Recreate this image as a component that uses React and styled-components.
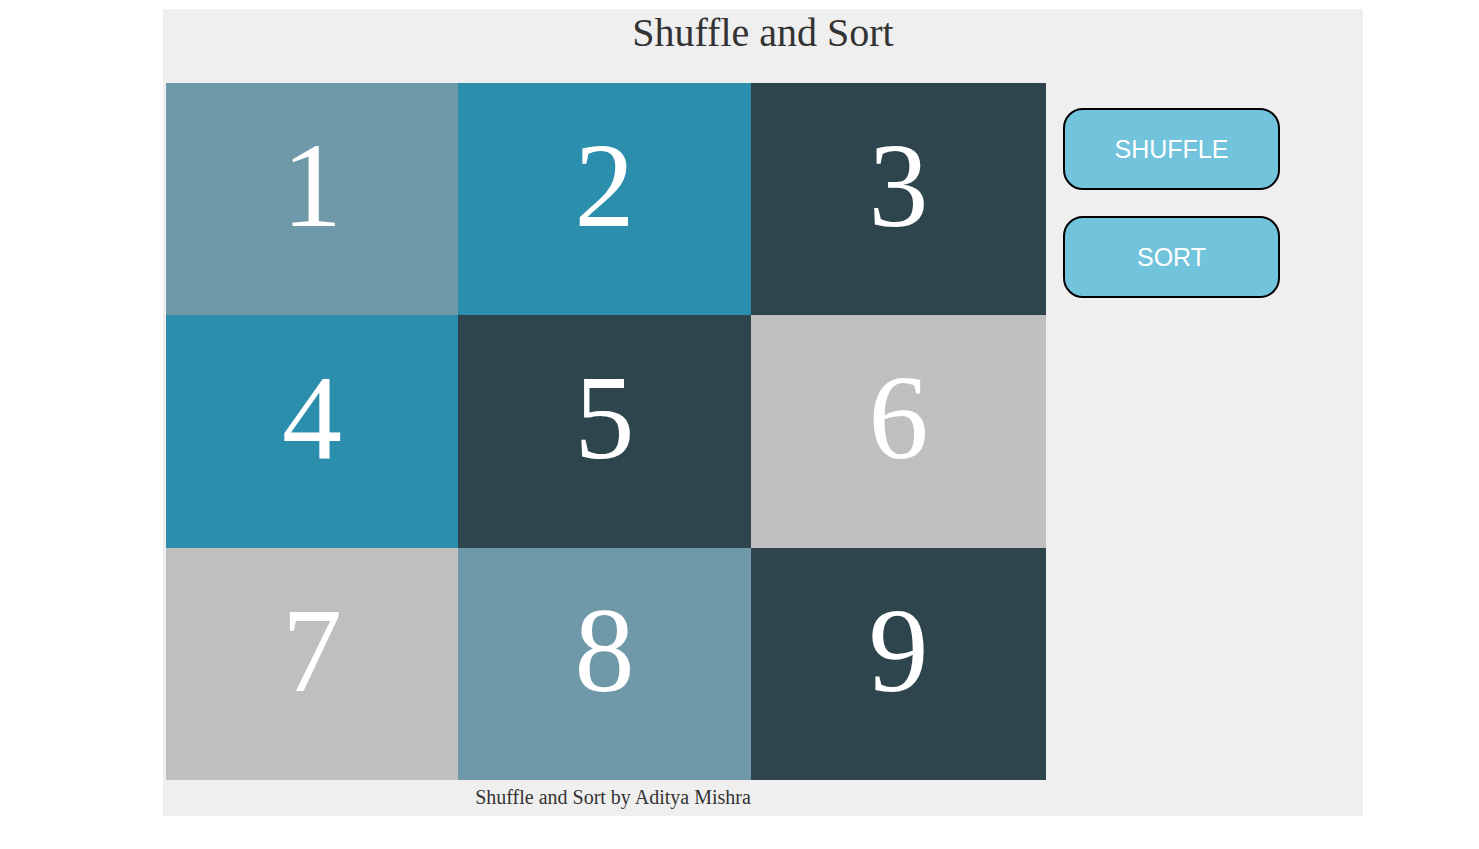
import React, { useState } from "react";
import styled, { createGlobalStyle } from "styled-components";

const GlobalStyle = createGlobalStyle`
  body {
    margin: 8px;
    background: #ffffff;
    font-family: "Liberation Serif", "Times New Roman", serif;
  }
`;

const COLORS = {
  1: "#6f98a8",
  2: "#2b8ead",
  3: "#2f454e",
  4: "#2b8ead",
  5: "#2f454e",
  6: "#bfbfbf",
  7: "#bfbfbf",
  8: "#6f98a8",
  9: "#2f454e",
};

const ORDER = [1, 2, 3, 4, 5, 6, 7, 8, 9];

export default function App() {
  const [cards, setCards] = useState(ORDER);

  const shuffle = () => {
    const next = [...cards];
    for (let i = next.length - 1; i > 0; i--) {
      const j = Math.floor(Math.random() * (i + 1));
      [next[i], next[j]] = [next[j], next[i]];
    }
    setCards(next);
  };

  const sort = () => setCards([...cards].sort((a, b) => a - b));

  return (
    <>
      <GlobalStyle />
      <Container>
        <Title>Shuffle and Sort</Title>
        <Body>
          <Main>
            <Grid>
              {cards.map((n) => (
                <Card key={n} $bg={COLORS[n]}>
                  {n}
                </Card>
              ))}
            </Grid>
            <Footer>Shuffle and Sort by Aditya Mishra</Footer>
          </Main>
          <Controls>
            <Button onClick={shuffle}>SHUFFLE</Button>
            <Button onClick={sort}>SORT</Button>
          </Controls>
        </Body>
      </Container>
    </>
  );
}

const Container = styled.div`
  width: 1200px;
  margin: 1px 0 0 155px;
  background: #efefef;
`;

const Title = styled.h1`
  margin: 0 0 27px;
  padding-top: 1px;
  font-family: "Liberation Serif", "Times New Roman", serif;
  font-weight: 400;
  font-size: 40px;
  line-height: 46px;
  color: #333333;
  text-align: center;
`;

const Body = styled.div`
  display: flex;
  align-items: flex-start;
`;

const Main = styled.div`
  width: 900px;
  display: flex;
  flex-direction: column;
`;

const Grid = styled.div`
  margin-left: 3px;
  width: 880px;
  display: grid;
  grid-template-columns: 292px 293px 295px;
  grid-template-rows: 232px 233px 232px;
`;

const Card = styled.div`
  background: ${(p) => p.$bg};
  color: #ffffff;
  font-family: "Liberation Serif", "Times New Roman", serif;
  font-size: 120px;
  line-height: 133px;
  padding-top: 36px;
  box-sizing: border-box;
  text-align: center;
`;

const Footer = styled.div`
  padding: 6px 0 7px;
  font-size: 20px;
  line-height: 23px;
  color: #333333;
  text-align: center;
`;

const Controls = styled.div`
  padding-top: 25px;
  display: flex;
  flex-direction: column;
  gap: 26px;
`;

const Button = styled.button`
  width: 217px;
  height: 82px;
  box-sizing: border-box;
  border: 2px solid #000000;
  border-radius: 20px;
  background: #72c3dc;
  color: #ffffff;
  font-family: "Liberation Sans", Arial, sans-serif;
  font-size: 25px;
  cursor: pointer;
`;
